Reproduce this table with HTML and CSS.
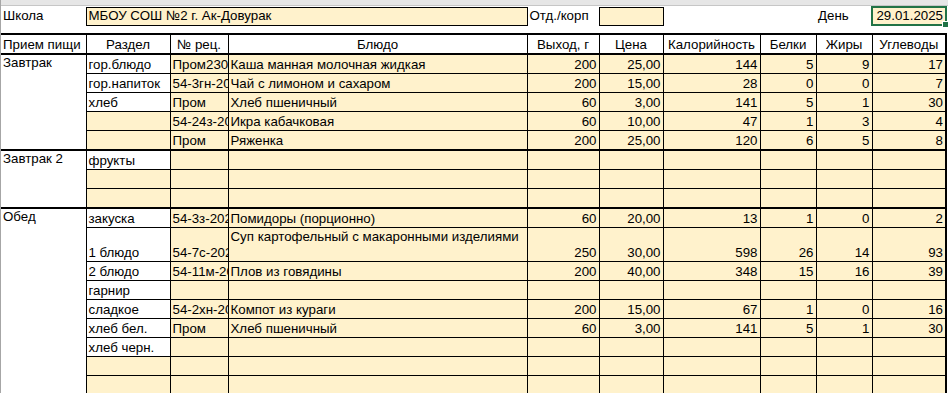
FILE: index.html
```html
<!DOCTYPE html>
<html lang="ru">
<head>
<meta charset="utf-8">
<title>Меню</title>
<link rel="stylesheet" href="styles.css">
</head>
<body>
<div class="frame">
  <div class="topbar"></div>
  <table class="sheet">
    <colgroup>
      <col class="c1"><col class="c2"><col class="c3"><col class="c4"><col class="c5">
      <col class="c6"><col class="c7"><col class="c8"><col class="c9"><col class="c10">
    </colgroup>
    <tr class="top">
      <td>Школа</td>
      <td class="box" colspan="3">МБОУ СОШ №2 г. Ак-Довурак</td>
      <td>Отд./корп</td>
      <td class="box"></td>
      <td></td>
      <td></td>
      <td>День</td>
      <td class="date"><span>29.01.2025</span><i class="handle"></i></td>
    </tr>
    <tr class="spacer"><td colspan="10"></td></tr>
    <tr class="head">
      <td class="left">Прием пищи</td>
      <td>Раздел</td>
      <td>№ рец.</td>
      <td>Блюдо</td>
      <td>Выход, г</td>
      <td>Цена</td>
      <td>Калорийность</td>
      <td>Белки</td>
      <td>Жиры</td>
      <td>Углеводы</td>
    </tr>

    <tr class="row grp">
      <td class="meal" rowspan="5">Завтрак</td>
      <td class="w">гор.блюдо</td><td class="y">Пром2303</td><td class="y">Каша манная молочная жидкая</td>
      <td class="y n">200</td><td class="y n">25,00</td><td class="y n">144</td><td class="y n">5</td><td class="y n">9</td><td class="y n">17</td>
    </tr>
    <tr class="row">
      <td class="w">гор.напиток</td><td class="y">54-3гн-2020</td><td class="y">Чай с лимоном и сахаром</td>
      <td class="y n">200</td><td class="y n">15,00</td><td class="y n">28</td><td class="y n">0</td><td class="y n">0</td><td class="y n">7</td>
    </tr>
    <tr class="row">
      <td class="w">хлеб</td><td class="y">Пром</td><td class="y">Хлеб пшеничный</td>
      <td class="y n">60</td><td class="y n">3,00</td><td class="y n">141</td><td class="y n">5</td><td class="y n">1</td><td class="y n">30</td>
    </tr>
    <tr class="row">
      <td class="y"></td><td class="y">54-24з-2020</td><td class="y">Икра кабачковая</td>
      <td class="y n">60</td><td class="y n">10,00</td><td class="y n">47</td><td class="y n">1</td><td class="y n">3</td><td class="y n">4</td>
    </tr>
    <tr class="row">
      <td class="y"></td><td class="y">Пром</td><td class="y">Ряженка</td>
      <td class="y n">200</td><td class="y n">25,00</td><td class="y n">120</td><td class="y n">6</td><td class="y n">5</td><td class="y n">8</td>
    </tr>

    <tr class="row grp">
      <td class="meal" rowspan="3">Завтрак 2</td>
      <td class="w">фрукты</td><td class="y"></td><td class="y"></td>
      <td class="y"></td><td class="y"></td><td class="y"></td><td class="y"></td><td class="y"></td><td class="y"></td>
    </tr>
    <tr class="row">
      <td class="y"></td><td class="y"></td><td class="y"></td>
      <td class="y"></td><td class="y"></td><td class="y"></td><td class="y"></td><td class="y"></td><td class="y"></td>
    </tr>
    <tr class="row">
      <td class="y"></td><td class="y"></td><td class="y"></td>
      <td class="y"></td><td class="y"></td><td class="y"></td><td class="y"></td><td class="y"></td><td class="y"></td>
    </tr>

    <tr class="row grp">
      <td class="meal" rowspan="10">Обед</td>
      <td class="w">закуска</td><td class="y">54-3з-2020</td><td class="y">Помидоры (порционно)</td>
      <td class="y n">60</td><td class="y n">20,00</td><td class="y n">13</td><td class="y n">1</td><td class="y n">0</td><td class="y n">2</td>
    </tr>
    <tr class="row tall">
      <td class="w">1 блюдо</td><td class="y">54-7с-2020</td><td class="y wrap">Суп картофельный с макаронными изделиями</td>
      <td class="y n">250</td><td class="y n">30,00</td><td class="y n">598</td><td class="y n">26</td><td class="y n">14</td><td class="y n">93</td>
    </tr>
    <tr class="row">
      <td class="w">2 блюдо</td><td class="y">54-11м-2020</td><td class="y">Плов из говядины</td>
      <td class="y n">200</td><td class="y n">40,00</td><td class="y n">348</td><td class="y n">15</td><td class="y n">16</td><td class="y n">39</td>
    </tr>
    <tr class="row">
      <td class="w">гарнир</td><td class="y"></td><td class="y"></td>
      <td class="y"></td><td class="y"></td><td class="y"></td><td class="y"></td><td class="y"></td><td class="y"></td>
    </tr>
    <tr class="row">
      <td class="w">сладкое</td><td class="y">54-2хн-2020</td><td class="y">Компот из кураги</td>
      <td class="y n">200</td><td class="y n">15,00</td><td class="y n">67</td><td class="y n">1</td><td class="y n">0</td><td class="y n">16</td>
    </tr>
    <tr class="row">
      <td class="w">хлеб бел.</td><td class="y">Пром</td><td class="y">Хлеб пшеничный</td>
      <td class="y n">60</td><td class="y n">3,00</td><td class="y n">141</td><td class="y n">5</td><td class="y n">1</td><td class="y n">30</td>
    </tr>
    <tr class="row">
      <td class="w">хлеб черн.</td><td class="y"></td><td class="y"></td>
      <td class="y"></td><td class="y"></td><td class="y"></td><td class="y"></td><td class="y"></td><td class="y"></td>
    </tr>
    <tr class="row">
      <td class="y"></td><td class="y"></td><td class="y"></td>
      <td class="y"></td><td class="y"></td><td class="y"></td><td class="y"></td><td class="y"></td><td class="y"></td>
    </tr>
    <tr class="row">
      <td class="y"></td><td class="y"></td><td class="y"></td>
      <td class="y"></td><td class="y"></td><td class="y"></td><td class="y"></td><td class="y"></td><td class="y"></td>
    </tr>
    <tr class="row">
      <td class="y"></td><td class="y"></td><td class="y"></td>
      <td class="y"></td><td class="y"></td><td class="y"></td><td class="y"></td><td class="y"></td><td class="y"></td>
    </tr>
  </table>
</div>
</body>
</html>
```

FILE: styles.css
```css
html, body {
  margin: 0;
  padding: 0;
  background: #ffffff;
}

body {
  font-family: "Liberation Sans", Arial, sans-serif;
  font-size: 13.3px;
  color: #000000;
}

.frame {
  width: 947px;
  height: 393px;
  overflow: hidden;
  border-left: 1px solid #a6a6a6;
}

.topbar {
  height: 5px;
  background: #e6e6e6;
  border-bottom: 1px solid #c6c6c6;
}

.sheet {
  border-collapse: collapse;
  table-layout: fixed;
  width: 946px;
}

.c1 { width: 85px; }
.c2 { width: 84px; }
.c3 { width: 58px; }
.c4 { width: 299px; }
.c5 { width: 72px; }
.c6 { width: 64px; }
.c7 { width: 97px; }
.c8 { width: 56px; }
.c9 { width: 56px; }
.c10 { width: 74px; }

.sheet td {
  padding: 0 2px 0 2px;
  white-space: nowrap;
  overflow: hidden;
  vertical-align: bottom;
  line-height: 16px;
}

/* top info row */
.top td {
  height: 15px;
  vertical-align: middle;
}

.top .box {
  background: #fff2cc;
  border: 1px solid #000000;
}

.top .date {
  position: relative;
  background: #fff2cc;
  border: 2px solid #217346;
  text-align: right;
  overflow: visible;
}

.handle {
  position: absolute;
  right: -4px;
  bottom: -4px;
  width: 5px;
  height: 5px;
  background: #217346;
  border: 1px solid #ffffff;
}

.spacer td {
  height: 7px;
  padding: 0;
}

/* column headers */
.head td {
  height: 18px;
  text-align: center;
  border-top: 2px solid #000000;
  border-bottom: 2px solid #000000;
  border-left: 1px solid #000000;
  border-right: 1px solid #000000;
}

.head td.left {
  text-align: left;
  border-left: none;
}

.head td:last-child {
  border-right: 2px solid #000000;
}

/* data rows */
.row td {
  height: 18px;
  border: 1px solid #000000;
}

.row td:last-child {
  border-right: 2px solid #000000;
}

.row.grp td {
  border-top: 2px solid #000000;
}

.row.tall td {
  height: 32px;
}

.row td.meal {
  vertical-align: top;
  background: #ffffff;
  border-left: none;
}

.row td.wrap {
  vertical-align: top;
  padding-top: 1px;
}

.w { background: #ffffff; }
.y { background: #fff2cc; }
.n { text-align: right; }
```
